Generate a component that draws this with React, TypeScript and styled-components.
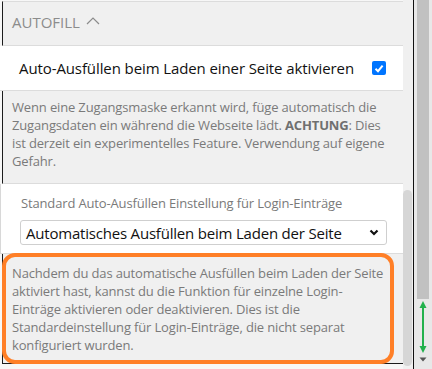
import React from "react";
import styled, { createGlobalStyle } from "styled-components";

const Global = createGlobalStyle`
  html, body { margin: 0; padding: 0; }
  body {
    width: 432px;
    height: 369px;
    overflow: hidden;
    background: #f7f7f7;
    font-family: "Open Sans", "Liberation Sans", sans-serif;
  }
`;

const Frame = styled.div`
  display: flex;
  width: 432px;
  height: 369px;
  overflow: hidden;
`;

const Column = styled.div`
  width: 403px;
  display: flex;
  flex-direction: column;
  flex-shrink: 0;
`;

const GraySection = styled.div<{ $top?: boolean }>`
  margin-left: 2px;
  border-left: 1px solid #1c1c1c;
  background: #f0f0f0;
  ${(p) => (p.$top ? "margin-top: 1px; border-top: 1px solid #dcdcdc;" : "")}
`;

const Header = styled(GraySection)`
  display: flex;
  align-items: center;
  gap: 6px;
  padding: 10px 0 13px 9px;
  border-bottom: 1px solid #dcdcdc;
  font-size: 15px;
  line-height: 20px;
  color: #8c8c8c;
  text-transform: uppercase;
`;

const Caret = styled.svg`
  width: 14px;
  height: 8px;
  margin-top: -2px;
`;

const ToggleRow = styled.label`
  display: flex;
  align-items: center;
  justify-content: space-between;
  background: #fff;
  padding: 12px 17px 12px 19px;
  border-bottom: 1px solid #dcdcdc;
  font-size: 15px;
  letter-spacing: -0.1px;
  line-height: 20px;
  color: #111;
  white-space: nowrap;
`;

const Check = styled.span`
  width: 14px;
  height: 14px;
  border-radius: 2px;
  background: #0075ff;
  display: flex;
  align-items: center;
  justify-content: center;
`;

const Desc = styled(GraySection)<{ $pt: number; $pb: number }>`
  padding: ${(p) => p.$pt}px 14px ${(p) => p.$pb}px 9px;
  font-size: 13px;
  letter-spacing: -0.15px;
  line-height: 18px;
  color: #7a7a7a;
  border-bottom: 1px solid #dcdcdc;
  b { font-weight: 700; color: #6f6f6f; }
`;

const Info = styled(Desc)`
  position: relative;
  padding-right: 12px;
  border-bottom: 1px solid #1c1c1c;
`;

const Highlight = styled.div`
  position: absolute;
  left: -1px;
  top: -1px;
  right: 9px;
  bottom: -1px;
  border: 4px solid #ff7f27;
  border-radius: 13px;
  pointer-events: none;
`;

const SettingSection = styled.div`
  background: #fff;
  border-left: 1px solid #d8d8d8;
  padding: 10px 16px 8px 19px;
  display: flex;
  flex-direction: column;
  gap: 8px;
  border-bottom: 1px solid #dcdcdc;
`;

const FieldLabel = styled.div`
  font-size: 13px;
  letter-spacing: -0.15px;
  line-height: 18px;
  color: #7a7a7a;
  padding-left: 1px;
  white-space: nowrap;
`;

const SelectBox = styled.div`
  height: 25px;
  box-sizing: border-box;
  border: 1px solid #cfcfcf;
  border-radius: 3px;
  display: flex;
  align-items: center;
  justify-content: space-between;
  padding: 0 7px 0 5px;
  font-size: 15px;
  letter-spacing: -0.2px;
  line-height: 20px;
  color: #111;
  white-space: nowrap;
`;

const InnerTrack = styled.div`
  width: 10px;
  flex-shrink: 0;
  background: #f0f0f0;
  display: flex;
  flex-direction: column;
  padding-top: 190px;
  box-sizing: border-box;
`;

const InnerThumb = styled.div`
  width: 9px;
  height: 176px;
  background: #d6d6d6;
  border-radius: 5px;
`;

const OuterBar = styled.div`
  width: 18px;
  flex-shrink: 0;
  border-left: 1px solid #111;
  background: #e8e8e8;
  display: flex;
  flex-direction: column;
  align-items: flex-start;
`;

const OuterThumb = styled.div`
  margin-left: 3px;
  width: 12px;
  height: 299px;
  background: #c1c1c1;
`;

const ArrowArea = styled.div`
  width: 18px;
  height: 56px;
  display: flex;
  justify-content: center;
`;

const DownBtn = styled.div`
  width: 18px;
  display: flex;
  justify-content: center;
  padding-top: 2px;
`;

export default function App() {
  return (
    <Frame>
      <Global />
      <Column>
        <Header $top>
          <span>Autofill</span>
          <Caret viewBox="0 0 14 8">
            <polyline points="1,7 7,1 13,7" fill="none" stroke="#8c8c8c" strokeWidth="1.2" />
          </Caret>
        </Header>
        <ToggleRow>
          <span>Auto-Ausfüllen beim Laden einer Seite aktivieren</span>
          <Check>
            <svg width="10" height="9" viewBox="0 0 10 9">
              <polyline points="1.5,4.8 4,7.2 8.6,1.6" fill="none" stroke="#fff" strokeWidth="2" />
            </svg>
          </Check>
        </ToggleRow>
        <Desc $pt={7} $pb={13}>
          Wenn eine Zugangsmaske erkannt wird, füge automatisch die Zugangsdaten ein während die
          Webseite lädt. <b>ACHTUNG</b>: Dies ist derzeit ein experimentelles Feature. Verwendung
          auf eigene Gefahr.
        </Desc>
        <SettingSection>
          <FieldLabel>Standard Auto-Ausfüllen Einstellung für Login-Einträge</FieldLabel>
          <SelectBox>
            <span>Automatisches Ausfüllen beim Laden der Seite</span>
            <svg width="10" height="7" viewBox="0 0 10 7">
              <polyline points="1.5,1.5 5,5 8.5,1.5" fill="none" stroke="#111" strokeWidth="2.2" />
            </svg>
          </SelectBox>
        </SettingSection>
        <Info $pt={10} $pb={9}>
          Nachdem du das automatische Ausfüllen beim Laden der Seite aktiviert hast, kannst du die
          Funktion für einzelne Login-Einträge aktivieren oder deaktivieren. Dies ist die
          Standardeinstellung für Login-Einträge, die nicht separat konfiguriert wurden.
          <Highlight />
        </Info>
      </Column>
      <InnerTrack>
        <InnerThumb />
      </InnerTrack>
      <OuterBar>
        <OuterThumb />
        <ArrowArea>
          <svg width="10" height="56" viewBox="0 0 10 56">
            <line x1="5" y1="6" x2="5" y2="50" stroke="#22b14c" strokeWidth="2" />
            <polygon points="5,2 1.5,9 8.5,9" fill="#22b14c" />
            <polygon points="5,54 1.5,47 8.5,47" fill="#22b14c" />
          </svg>
        </ArrowArea>
        <DownBtn>
          <svg width="8" height="5" viewBox="0 0 8 5">
            <polygon points="0.5,0.5 7.5,0.5 4,4.5" fill="#555" />
          </svg>
        </DownBtn>
      </OuterBar>
    </Frame>
  );
}
